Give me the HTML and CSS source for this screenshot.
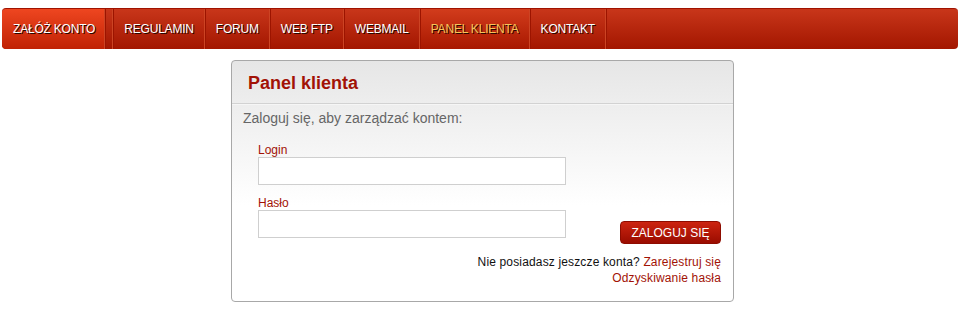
FILE: index.html
```html
<!DOCTYPE html>
<html lang="pl">
<head>
  <meta charset="UTF-8" />
  <title>Panel klienta</title>
  <link rel="stylesheet" href="styles.css">
</head>
<body>
  <ul class="menu">
    <li class="first"><a href="#">ZAŁÓŻ KONTO</a></li>
    <li class="spacer"></li>
    <li><a href="#">REGULAMIN</a></li>
    <li><a href="#">FORUM</a></li>
    <li><a href="#">WEB FTP</a></li>
    <li><a href="#">WEBMAIL</a></li>
    <li class="active"><a href="#">PANEL KLIENTA</a></li>
    <li><a href="#">KONTAKT</a></li>
  </ul>

  <div class="panel">
    <div class="panel-head">
      <h2>Panel klienta</h2>
    </div>
    <div class="panel-body">
      <p class="intro">Zaloguj się, aby zarządzać kontem:</p>
      <form class="login">
        <div class="fields">
          <label for="login">Login</label>
          <input type="text" id="login" />
          <label for="pass">Hasło</label>
          <input type="password" id="pass" />
        </div>
        <button type="submit">ZALOGUJ SIĘ</button>
      </form>
      <div class="links">
        Nie posiadasz jeszcze konta? <a href="#">Zarejestruj się</a><br />
        <a href="#">Odzyskiwanie hasła</a>
      </div>
    </div>
  </div>
</body>
</html>
```

FILE: styles.css
```css
/* Reset & base */
* {
  box-sizing: border-box;
}
body {
  margin: 0;
  padding: 0;
  font-family: "Liberation Sans", Arial, sans-serif;
  background: white;
}

/* Top menu */
.menu {
  list-style: none;
  margin: 8px 1px 0 2px;
  padding: 0;
  height: 41px;
  display: flex;
  border-radius: 4px;
  border-top: 1px solid #a01200;
  background: linear-gradient(to bottom, #c8361a, #a31600);
  overflow: hidden;
}
.menu li {
  display: flex;
  border-right: 1px solid #9c1400;
  box-shadow: inset -1px 0 0 #cc4424;
}
.menu li.spacer {
  width: 8px;
}
.menu a {
  display: flex;
  align-items: center;
  padding: 0 11px 0 10px;
  color: white;
  font-size: 12px;
  letter-spacing: -0.2px;
  text-decoration: none;
  text-shadow: 1px 1px 0 #2a0600;
}
.menu .first {
  background: linear-gradient(to bottom, #ee4620, #c02204);
  border-radius: 4px 0 0 4px;
}
.menu .first a {
  padding: 0 10px 0 11px;
}
.menu .active a {
  color: #f7c45a;
}
.menu .active {
  background: linear-gradient(to bottom, #d23c1c, #a81800);
}

/* Panel */
.panel {
  width: 503px;
  height: 242px;
  margin: 11px 0 0 231px;
  border: 1px solid #a8a8a8;
  border-radius: 4px;
  background: linear-gradient(to bottom, #e6e6e6, #ffffff 60%);
}
.panel-head {
  height: 43px;
  padding: 3px 16px 0;
  border-bottom: 1px solid #d2d2d2;
  box-shadow: 0 1px 0 #f6f6f6;
  display: flex;
  align-items: center;
}
h2 {
  margin: 0;
  font-size: 18px;
  font-weight: 700;
  color: #a21206;
}
.panel-body {
  padding: 6px 12px 0 11px;
}
.intro {
  margin: 0;
  font-size: 14px;
  color: #666;
}
.login {
  display: flex;
  justify-content: space-between;
  align-items: flex-end;
  margin-top: 17px;
}
.fields {
  display: flex;
  flex-direction: column;
  padding-left: 15px;
}
label {
  font-size: 12px;
  color: #a21206;
  line-height: 14px;
}
input[type="text"],
input[type="password"] {
  width: 308px;
  height: 28px;
  margin: 0 0 11px;
  border: 1px solid #cfcfcf;
  background: white;
  font-size: 13px;
}
input:last-child {
  margin-bottom: 0;
}
button {
  width: 101px;
  height: 23px;
  margin-bottom: -6px;
  padding: 0;
  border: 1px solid #8e0c00;
  border-radius: 4px;
  background: linear-gradient(to bottom, #cc2410, #9a0c00);
  color: white;
  font-family: "Liberation Sans", Arial, sans-serif;
  font-size: 12px;
  cursor: pointer;
}
.links {
  margin-top: 16px;
  text-align: right;
  font-size: 12px;
  letter-spacing: 0.15px;
  line-height: 16px;
  color: #111;
}
.links a {
  color: #a21206;
  text-decoration: none;
}
```
